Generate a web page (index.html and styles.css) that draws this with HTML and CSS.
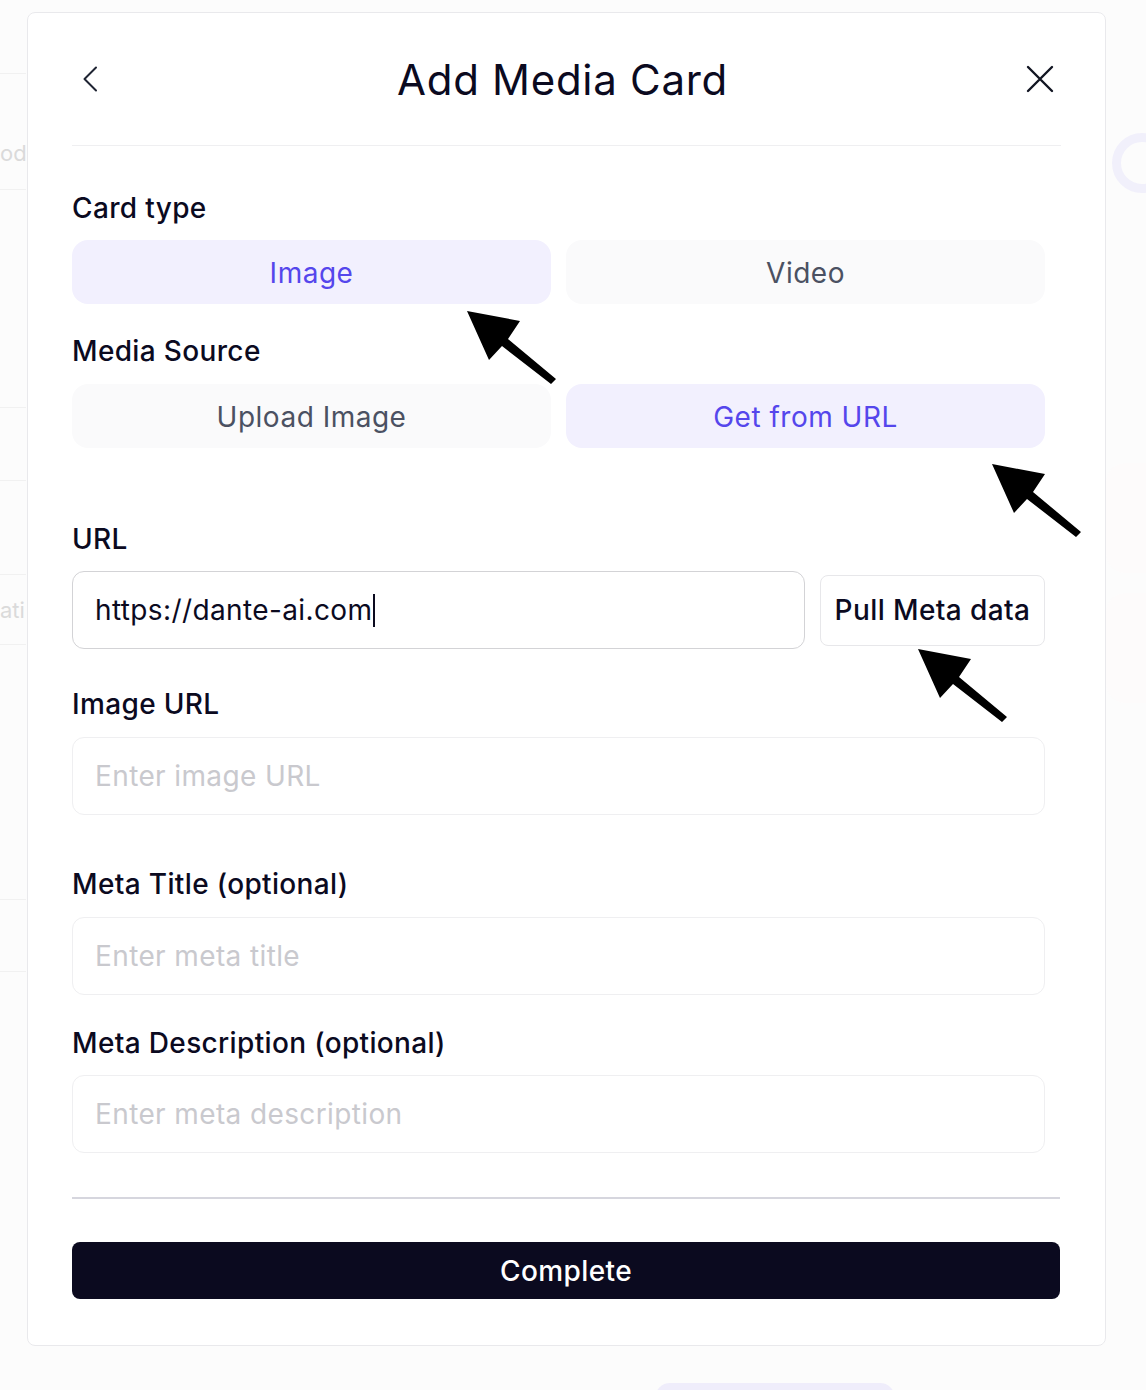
FILE: index.html
```html
<!DOCTYPE html>
<html lang="en">
<head>
<meta charset="utf-8">
<title>Add Media Card</title>
<link rel="stylesheet" href="styles.css">
</head>
<body>
<div class="page">
  <div class="side-left">
    <div class="row r1"></div>
    <div class="row r2"><span class="ghost">od</span></div>
    <div class="row r3"></div>
    <div class="row r4"></div>
    <div class="row r5"></div>
    <div class="row r6"><span class="ghost">ati</span></div>
    <div class="row r7"></div>
    <div class="row r8"></div>
  </div>
  <div class="side-right">
    <div class="ring"></div>
    <div class="ghost-card c1"></div>
    <div class="ghost-card c2"></div>
  </div>
  <div class="bottom-pill"></div>
</div>

<div class="overlay">
  <div class="modal">
    <header class="modal-header">
      <button class="icon-btn back" aria-label="Back">
        <svg width="16" height="26" viewBox="0 0 16 26"><path d="M14 1.5 L2.5 13 L14 24.5" fill="none" stroke="#1f2433" stroke-width="2" stroke-linecap="round" stroke-linejoin="round"/></svg>
      </button>
      <h1 class="title">Add Media Card</h1>
      <button class="icon-btn close" aria-label="Close">
        <svg width="28" height="28" viewBox="0 0 28 28"><path d="M2 2 L26 26 M26 2 L2 26" fill="none" stroke="#111522" stroke-width="2.4" stroke-linecap="round"/></svg>
      </button>
    </header>

    <div class="modal-body">
      <div class="label l-card">Card type</div>
      <div class="seg">
        <button class="seg-btn active">Image</button>
        <button class="seg-btn">Video</button>
      </div>

      <div class="label l-source">Media Source</div>
      <div class="seg">
        <button class="seg-btn">Upload Image</button>
        <button class="seg-btn active">Get from URL</button>
      </div>

      <div class="label l-url">URL</div>
      <div class="url-row">
        <div class="field field-strong"><span class="val">https://dante-ai.com</span><span class="caret"></span></div>
        <button class="pull-btn">Pull Meta data</button>
      </div>

      <div class="label l-img">Image URL</div>
      <input class="field" type="text" placeholder="Enter image URL">

      <div class="label l-title">Meta Title (optional)</div>
      <input class="field" type="text" placeholder="Enter meta title">

      <div class="label l-desc">Meta Description (optional)</div>
      <input class="field" type="text" placeholder="Enter meta description">

      <div class="divider"></div>
      <button class="complete">Complete</button>
    </div>
  </div>

  <svg class="arrow a1" width="92" height="76" viewBox="0 0 92 76"><polygon points="0,0 53,10 41,28 89,68 84,73 35,35 22,49" fill="#000"/></svg>
  <svg class="arrow a2" width="92" height="76" viewBox="0 0 92 76"><polygon points="0,0 53,10 41,28 89,68 84,73 35,35 22,49" fill="#000"/></svg>
  <svg class="arrow a3" width="92" height="76" viewBox="0 0 92 76"><polygon points="0,0 53,10 41,28 89,68 84,73 35,35 22,49" fill="#000"/></svg>
</div>
</body>
</html>
```

FILE: styles.css
```css
* { box-sizing: border-box; }

html, body {
  margin: 0;
  padding: 0;
  background: #fcfcfc;
  font-family: Inter, "Noto Sans", "Liberation Sans", sans-serif;
  color: #0b0a1f;
}

body {
  width: 1146px;
  height: 1390px;
  overflow: hidden;
}

/* underlying faint page */
.page {
  height: 1390px;
  display: flex;
  justify-content: space-between;
}

.side-left {
  width: 26px;
  display: flex;
  flex-direction: column;
  overflow: hidden;
}

.row {
  border-bottom: 1px solid #f1f1f1;
  display: flex;
  align-items: center;
}
.r1 { height: 74px; }
.r2 { height: 116px; padding-top: 42px; }
.r3 { height: 218px; }
.r4 { height: 73px; }
.r5 { height: 94px; }
.r6 { height: 70px; }
.r7 { height: 255px; }
.r8 { height: 72px; }

.ghost {
  font-size: 22px;
  color: #dadada;
  white-space: nowrap;
}

.side-right {
  width: 40px;
  padding-top: 133px;
  display: flex;
  flex-direction: column;
  align-items: flex-end;
}

.ring {
  width: 60px;
  height: 60px;
  margin-right: -26px;
  border-radius: 50%;
  border: 9px solid #f1f0fb;
}

.ghost-card {
  width: 40px;
  height: 110px;
  border-radius: 20px 0 0 20px;
  background: #fdfbfb;
}
.c1 { margin-top: 270px; }
.c2 { margin-top: 20px; }

.bottom-pill {
  position: absolute;
  left: 655px;
  top: 1383px;
  width: 240px;
  height: 30px;
  border-radius: 15px;
  background: #efedfb;
}

/* overlay + modal */
.overlay {
  position: fixed;
  inset: 0;
  padding: 12px 0 0 27px;
}

.modal {
  width: 1079px;
  height: 1334px;
  background: #ffffff;
  border: 1px solid #e9e9ec;
  border-radius: 8px;
  padding: 0 44px;
}

.modal-header {
  height: 133px;
  border-bottom: 1px solid #efeff1;
  display: grid;
  grid-template-columns: 40px 1fr 40px;
  align-items: center;
}

.icon-btn {
  background: none;
  border: 0;
  padding: 0;
  height: 40px;
  display: flex;
  align-items: center;
  justify-content: center;
  cursor: pointer;
}
.back svg { margin-left: -4px; }
.close svg { margin-left: -2px; }

.title {
  margin: 0 8px 0 0;
  text-align: center;
  font-size: 42px;
  font-weight: 400;
  letter-spacing: 0.7px;
  color: #0b0a1f;
}

.modal-body {
  display: flex;
  flex-direction: column;
}

.label {
  font-size: 28px;
  line-height: 34px;
  font-weight: 500;
  letter-spacing: 0.35px;
  color: #0b0a1f;
  margin-bottom: 15px;
}
.l-card { margin-top: 45px; }
.l-source { margin-top: 30px; margin-bottom: 16px; }
.l-url { margin-top: 74px; }
.l-img { margin-top: 38px; margin-bottom: 16px; }
.l-title { margin-top: 52px; margin-bottom: 16px; }
.l-desc { margin-top: 31px; }

.seg {
  width: 973px;
  display: grid;
  grid-template-columns: 1fr 1fr;
  gap: 15px;
}

.seg-btn {
  height: 64px;
  border: 0;
  border-radius: 16px;
  background: #fafafb;
  color: #4b5162;
  font-family: inherit;
  font-size: 28px;
  font-weight: 400;
  letter-spacing: 0.5px;
  padding: 2px 0 0;
  cursor: pointer;
}
.seg-btn.active {
  background: #f2f0fe;
  color: #5546ec;
}

.url-row {
  width: 973px;
  display: flex;
  align-items: center;
  gap: 15px;
}

.field {
  width: 973px;
  height: 78px;
  border: 1px solid #efeff1;
  border-radius: 12px;
  padding: 0 22px;
  font-family: inherit;
  font-size: 28px;
  letter-spacing: 0.38px;
  color: #0b0a1f;
  background: #fff;
  outline: none;
}
.field::placeholder { color: #c9c9ce; }

.field-strong {
  width: 733px;
  border-color: #d3d3d6;
  display: flex;
  align-items: center;
}
.caret {
  width: 2px;
  height: 33px;
  background: #0b0a1f;
  margin-left: 1px;
}

.pull-btn {
  width: 225px;
  height: 71px;
  border: 1px solid #e7e7ea;
  border-radius: 8px;
  background: #fff;
  font-family: inherit;
  font-size: 28px;
  font-weight: 500;
  letter-spacing: 0.4px;
  color: #0b0a1f;
  cursor: pointer;
  padding: 0;
}

.divider {
  width: 988px;
  height: 2px;
  background: #d6d6de;
  margin-top: 44px;
}

.complete {
  width: 988px;
  height: 57px;
  margin-top: 43px;
  border: 0;
  border-radius: 8px;
  background: #0b0a1f;
  color: #ffffff;
  font-family: inherit;
  font-size: 28px;
  font-weight: 500;
  letter-spacing: 0.4px;
  cursor: pointer;
}

/* annotation arrows */
.arrow { position: absolute; }
.a1 { left: 467px; top: 311px; }
.a2 { left: 992px; top: 464px; }
.a3 { left: 918px; top: 649px; }
```
